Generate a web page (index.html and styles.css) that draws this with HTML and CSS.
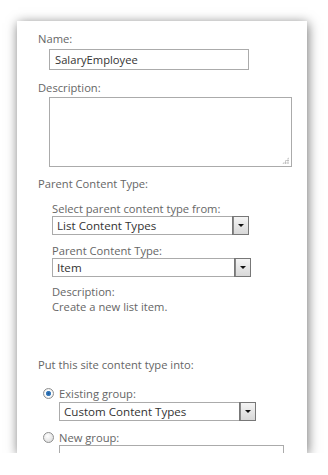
FILE: index.html
```html
<!DOCTYPE html>
<html lang="en">
<head>
<meta charset="utf-8"/>
<title>New Site Content Type</title>
<link rel="stylesheet" href="styles.css">
</head>
<body>
<div class="panel">
  <div class="label">Name:</div>
  <div class="textbox name-box">SalaryEmployee</div>

  <div class="label desc-label">Description:</div>
  <div class="textarea"><span class="grip"></span></div>

  <div class="label section-label">Parent Content Type:</div>
  <div class="sub">
    <div class="label first">Select parent content type from:</div>
    <div class="select w197"><span class="value">List Content Types</span><span class="arrow"></span></div>
    <div class="label second">Parent Content Type:</div>
    <div class="select w199"><span class="value">Item</span><span class="arrow"></span></div>
    <div class="label third">Description:</div>
    <div class="label">Create a new list item.</div>
  </div>

  <div class="label group-label">Put this site content type into:</div>
  <div class="radio-row first-radio">
    <span class="radio checked"></span>
    <span class="label">Existing group:</span>
  </div>
  <div class="select indent w197 group-select"><span class="value">Custom Content Types</span><span class="arrow"></span></div>
  <div class="radio-row second-radio">
    <span class="radio"></span>
    <span class="label">New group:</span>
  </div>
  <div class="textbox indent new-box"></div>
</div>
</body>
</html>
```

FILE: styles.css
```css
body {
  margin: 0;
  background: #fff;
  font-family: 'Open Sans', 'Noto Sans', sans-serif;
  font-size: 11.2px;
}
.panel {
  margin: 21px 0 0 17px;
  width: 290px;
  height: 432px;
  box-sizing: border-box;
  padding: 10px 0 0 21px;
  background: #fff;
  overflow: hidden;
  box-shadow: 1px 2px 11px rgba(0, 0, 0, 0.55);
}
.label {
  color: #666;
  line-height: 15px;
  white-space: nowrap;
}
.textbox {
  margin: 3px 0 0 11px;
  width: 200px;
  height: 21px;
  box-sizing: border-box;
  border: 1px solid #ababab;
  color: #333;
  line-height: 19px;
  padding-left: 5px;
}
.desc-label {
  margin-top: 10px;
}
.textarea {
  position: relative;
  margin: 2px 0 0 11px;
  width: 243px;
  height: 70px;
  box-sizing: border-box;
  border: 1px solid #ababab;
}
.grip {
  position: absolute;
  right: 2px;
  bottom: 2px;
  width: 7px;
  height: 7px;
  background:
    radial-gradient(circle, #aaa 0.7px, transparent 1px) 0 0 / 2.4px 2.4px;
  clip-path: polygon(100% 0, 100% 100%, 0 100%);
}
.section-label {
  margin-top: 9px;
}
.sub {
  padding-left: 14px;
}
.sub .first {
  margin-top: 10px;
}
.sub .second {
  margin-top: 8px;
}
.sub .third {
  margin-top: 7px;
}
.select {
  display: flex;
  align-items: stretch;
  height: 19px;
  box-sizing: border-box;
  border: 1px solid #ababab;
  color: #333;
  font-size: 11.6px;
}
.w197 { width: 197px; }
.w199 { width: 199px; }
.select .value {
  flex: 1;
  line-height: 17px;
  padding-left: 4px;
}
.select .arrow {
  position: relative;
  width: 14px;
  border-left: 1px solid #888;
  outline: 1px solid #777;
  background: linear-gradient(#f4f4f4, #d8d8d8);
}
.select .arrow::after {
  content: "";
  position: absolute;
  left: 4px;
  top: 7px;
  border-left: 3px solid transparent;
  border-right: 3px solid transparent;
  border-top: 3px solid #111;
}
.group-label {
  margin-top: 43px;
}
.radio-row {
  display: flex;
  align-items: center;
  gap: 5px;
  margin-left: 5px;
}
.first-radio {
  margin-top: 14px;
}
.second-radio {
  margin-top: 9px;
}
.radio {
  width: 11px;
  height: 11px;
  box-sizing: border-box;
  border-radius: 50%;
  border: 1px solid #8e8f8f;
  background: radial-gradient(circle at 40% 35%, #fff, #d6d6d6);
}
.radio.checked {
  background:
    radial-gradient(circle, #1c5a9a 0, #3d7fc0 2.2px, #fff 3px, #e6e6e6 5px);
}
.indent {
  margin-left: 21px;
}
.group-select {
  margin-top: 1px;
}
.new-box {
  margin-top: 0;
  width: 225px;
}
```
